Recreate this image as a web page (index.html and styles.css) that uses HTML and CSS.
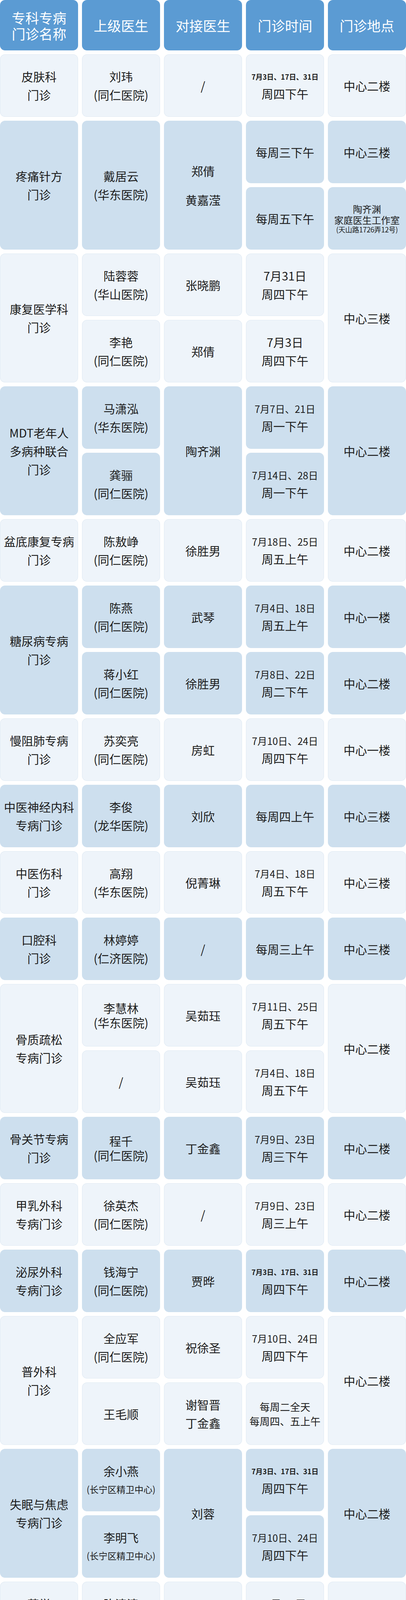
FILE: index.html
```html
<!DOCTYPE html>
<html lang="zh-CN">
<head>
<meta charset="utf-8">
<title>专科专病门诊</title>
<link rel="stylesheet" href="styles.css">
</head>
<body>
<div class="table">
  <div class="cell head"><div class="h">专科专病</div><div class="h">门诊名称</div></div>
  <div class="cell head"><div class="h">上级医生</div></div>
  <div class="cell head"><div class="h">对接医生</div></div>
  <div class="cell head"><div class="h">门诊时间</div></div>
  <div class="cell head"><div class="h">门诊地点</div></div>

  <!-- 1 皮肤科 -->
  <div class="cell lt"><div class="t">皮肤科</div><div class="t">门诊</div></div>
  <div class="cell lt"><div class="t">刘玮</div><div class="t">(同仁医院)</div></div>
  <div class="cell lt"><div class="t">/</div></div>
  <div class="cell lt"><div class="db">7月3日、17日、31日</div><div class="t">周四下午</div></div>
  <div class="cell lt"><div class="t">中心二楼</div></div>

  <!-- 2 疼痛针方 -->
  <div class="cell dk s2"><div class="t">疼痛针方</div><div class="t">门诊</div></div>
  <div class="cell dk s2"><div class="t">戴居云</div><div class="t">(华东医院)</div></div>
  <div class="cell dk s2"><div class="t wide">郑倩</div><div class="t wide">黄嘉滢</div></div>
  <div class="cell dk"><div class="t">每周三下午</div></div>
  <div class="cell dk"><div class="t">中心三楼</div></div>
  <div class="cell dk"><div class="t">每周五下午</div></div>
  <div class="cell dk"><div class="an">陶齐渊</div><div class="an">家庭医生工作室</div><div class="as">(天山路1726弄12号)</div></div>

  <!-- 3 康复医学科 -->
  <div class="cell lt s2"><div class="t">康复医学科</div><div class="t">门诊</div></div>
  <div class="cell lt"><div class="t">陆蓉蓉</div><div class="t">(华山医院)</div></div>
  <div class="cell lt"><div class="t">张晓鹏</div></div>
  <div class="cell lt"><div class="t">7月31日</div><div class="t">周四下午</div></div>
  <div class="cell lt s2"><div class="t">中心三楼</div></div>
  <div class="cell lt"><div class="t">李艳</div><div class="t">(同仁医院)</div></div>
  <div class="cell lt"><div class="t">郑倩</div></div>
  <div class="cell lt"><div class="t">7月3日</div><div class="t">周四下午</div></div>

  <!-- 4 MDT -->
  <div class="cell dk s2"><div class="t">MDT老年人</div><div class="t">多病种联合</div><div class="t">门诊</div></div>
  <div class="cell dk"><div class="t">马潇泓</div><div class="t">(华东医院)</div></div>
  <div class="cell dk s2"><div class="t">陶齐渊</div></div>
  <div class="cell dk"><div class="d">7月7日、21日</div><div class="t">周一下午</div></div>
  <div class="cell dk s2"><div class="t">中心二楼</div></div>
  <div class="cell dk"><div class="t">龚骊</div><div class="t">(同仁医院)</div></div>
  <div class="cell dk"><div class="d">7月14日、28日</div><div class="t">周一下午</div></div>

  <!-- 5 盆底 -->
  <div class="cell lt"><div class="t">盆底康复专病</div><div class="t">门诊</div></div>
  <div class="cell lt"><div class="t">陈敖峥</div><div class="t">(同仁医院)</div></div>
  <div class="cell lt"><div class="t">徐胜男</div></div>
  <div class="cell lt"><div class="d">7月18日、25日</div><div class="t">周五上午</div></div>
  <div class="cell lt"><div class="t">中心二楼</div></div>

  <!-- 6 糖尿病 -->
  <div class="cell dk s2"><div class="t">糖尿病专病</div><div class="t">门诊</div></div>
  <div class="cell dk"><div class="t">陈燕</div><div class="t">(同仁医院)</div></div>
  <div class="cell dk"><div class="t">武琴</div></div>
  <div class="cell dk"><div class="d">7月4日、18日</div><div class="t">周五上午</div></div>
  <div class="cell dk"><div class="t">中心一楼</div></div>
  <div class="cell dk"><div class="t">蒋小红</div><div class="t">(同仁医院)</div></div>
  <div class="cell dk"><div class="t">徐胜男</div></div>
  <div class="cell dk"><div class="d">7月8日、22日</div><div class="t">周二下午</div></div>
  <div class="cell dk"><div class="t">中心二楼</div></div>

  <!-- 7 慢阻肺 -->
  <div class="cell lt"><div class="t">慢阻肺专病</div><div class="t">门诊</div></div>
  <div class="cell lt"><div class="t">苏奕亮</div><div class="t">(同仁医院)</div></div>
  <div class="cell lt"><div class="t">房虹</div></div>
  <div class="cell lt"><div class="d">7月10日、24日</div><div class="t">周四下午</div></div>
  <div class="cell lt"><div class="t">中心一楼</div></div>

  <!-- 8 中医神经内科 -->
  <div class="cell dk"><div class="t">中医神经内科</div><div class="t">专病门诊</div></div>
  <div class="cell dk"><div class="t">李俊</div><div class="t">(龙华医院)</div></div>
  <div class="cell dk"><div class="t">刘欣</div></div>
  <div class="cell dk"><div class="t">每周四上午</div></div>
  <div class="cell dk"><div class="t">中心三楼</div></div>

  <!-- 9 中医伤科 -->
  <div class="cell lt"><div class="t">中医伤科</div><div class="t">门诊</div></div>
  <div class="cell lt"><div class="t">高翔</div><div class="t">(华东医院)</div></div>
  <div class="cell lt"><div class="t">倪菁琳</div></div>
  <div class="cell lt"><div class="d">7月4日、18日</div><div class="t">周五下午</div></div>
  <div class="cell lt"><div class="t">中心三楼</div></div>

  <!-- 10 口腔科 -->
  <div class="cell dk"><div class="t">口腔科</div><div class="t">门诊</div></div>
  <div class="cell dk"><div class="t">林婷婷</div><div class="t">(仁济医院)</div></div>
  <div class="cell dk"><div class="t">/</div></div>
  <div class="cell dk"><div class="t">每周三上午</div></div>
  <div class="cell dk"><div class="t">中心三楼</div></div>

  <!-- 11 骨质疏松 -->
  <div class="cell lt s2"><div class="t">骨质疏松</div><div class="t">专病门诊</div></div>
  <div class="cell lt"><div class="t tight">李慧林</div><div class="t tight">(华东医院)</div></div>
  <div class="cell lt"><div class="t">吴茹珏</div></div>
  <div class="cell lt"><div class="d">7月11日、25日</div><div class="t">周五下午</div></div>
  <div class="cell lt s2"><div class="t">中心二楼</div></div>
  <div class="cell lt"><div class="t">/</div></div>
  <div class="cell lt"><div class="t">吴茹珏</div></div>
  <div class="cell lt"><div class="d">7月4日、18日</div><div class="t">周五下午</div></div>

  <!-- 12 骨关节 -->
  <div class="cell dk"><div class="t">骨关节专病</div><div class="t">门诊</div></div>
  <div class="cell dk"><div class="t tight">程千</div><div class="t tight">(同仁医院)</div></div>
  <div class="cell dk"><div class="t">丁金鑫</div></div>
  <div class="cell dk"><div class="d">7月9日、23日</div><div class="t">周三下午</div></div>
  <div class="cell dk"><div class="t">中心二楼</div></div>

  <!-- 13 甲乳外科 -->
  <div class="cell lt"><div class="t">甲乳外科</div><div class="t">专病门诊</div></div>
  <div class="cell lt"><div class="t">徐英杰</div><div class="t">(同仁医院)</div></div>
  <div class="cell lt"><div class="t">/</div></div>
  <div class="cell lt"><div class="d">7月9日、23日</div><div class="t">周三上午</div></div>
  <div class="cell lt"><div class="t">中心二楼</div></div>

  <!-- 14 泌尿外科 -->
  <div class="cell dk"><div class="t">泌尿外科</div><div class="t">专病门诊</div></div>
  <div class="cell dk"><div class="t">钱海宁</div><div class="t">(同仁医院)</div></div>
  <div class="cell dk"><div class="t">贾晔</div></div>
  <div class="cell dk"><div class="db">7月3日、17日、31日</div><div class="t">周四下午</div></div>
  <div class="cell dk"><div class="t">中心二楼</div></div>

  <!-- 15 普外科 -->
  <div class="cell lt s2"><div class="t">普外科</div><div class="t">门诊</div></div>
  <div class="cell lt"><div class="t">全应军</div><div class="t">(同仁医院)</div></div>
  <div class="cell lt"><div class="t">祝徐圣</div></div>
  <div class="cell lt"><div class="d">7月10日、24日</div><div class="t">周四下午</div></div>
  <div class="cell lt s2"><div class="t">中心二楼</div></div>
  <div class="cell lt"><div class="t">王毛顺</div></div>
  <div class="cell lt"><div class="t">谢智晋</div><div class="t">丁金鑫</div></div>
  <div class="cell lt"><div class="m">每周二全天</div><div class="m">每周四、五上午</div></div>

  <!-- 16 失眠与焦虑 -->
  <div class="cell dk s2"><div class="t">失眠与焦虑</div><div class="t">专病门诊</div></div>
  <div class="cell dk"><div class="t">余小燕</div><div class="t sm">(长宁区精卫中心)</div></div>
  <div class="cell dk s2"><div class="t">刘蓉</div></div>
  <div class="cell dk"><div class="db">7月3日、17日、31日</div><div class="t">周四下午</div></div>
  <div class="cell dk s2"><div class="t">中心二楼</div></div>
  <div class="cell dk"><div class="t">李明飞</div><div class="t sm">(长宁区精卫中心)</div></div>
  <div class="cell dk"><div class="d">7月10日、24日</div><div class="t">周四下午</div></div>

  <!-- 17 药学 -->
  <div class="cell lt"><div class="t">药学</div><div class="t">门诊</div></div>
  <div class="cell lt"><div class="t">陈清清</div><div class="t">(同仁医院)</div></div>
  <div class="cell lt"><div class="t">孙涛</div></div>
  <div class="cell lt"><div class="t">7月17日</div><div class="t">周四上午</div></div>
  <div class="cell lt"><div class="t">中心二楼</div></div>

  <!-- 18 心脏康复 -->
  <div class="cell dk"><div class="t">心脏康复与</div><div class="t">体重管理门诊</div></div>
  <div class="cell dk"><div class="t">/</div></div>
  <div class="cell dk"><div class="t">赵云玲</div></div>
  <div class="cell dk"><div class="d">7月4日、18日</div><div class="t">周五下午</div></div>
  <div class="cell dk"><div class="t">中心三楼</div></div>

  <!-- 19 心脏起搏器 -->
  <div class="cell lt"><div class="t n26">心脏起搏器术后</div><div class="t">随访专病门诊</div></div>
  <div class="cell lt"><div class="t">吴献豪</div><div class="t">(同仁医院)</div></div>
  <div class="cell lt"><div class="t">赵云玲</div></div>
  <div class="cell lt"><div class="t">7月7日</div><div class="t">周一下午</div></div>
  <div class="cell lt"><div class="an">张晓鹏</div><div class="an">家庭医生工作室</div><div class="as">(天山二村60号甲)</div></div>

  <!-- 20 腰突症 -->
  <div class="cell dk"><div class="t">腰突症</div><div class="t">专病门诊</div></div>
  <div class="cell dk"><div class="t">崔晓</div><div class="t sm">(天山中医医院)</div></div>
  <div class="cell dk"><div class="t">谢智晋</div></div>
  <div class="cell dk"><div class="t">7月31日</div><div class="t">周四下午</div></div>
  <div class="cell dk"><div class="an">谢智晋</div><div class="an">家庭医生工作室</div><div class="as">(延安西路2029弄7号)</div></div>

  <!-- 21 中医肾脏 -->
  <div class="cell lt"><div class="t">中医肾脏</div><div class="t">专病门诊</div></div>
  <div class="cell lt"><div class="t">李交</div><div class="t">(龙华医院)</div></div>
  <div class="cell lt"><div class="t">谢智晋</div></div>
  <div class="cell lt"><div class="t">7月8日</div><div class="t">周二下午</div></div>
  <div class="cell lt"><div class="an">谢智晋</div><div class="an">家庭医生工作室</div><div class="as">(延安西路2029弄7号)</div></div>
</div>
</body>
</html>
```
FILE: styles.css
```css
html, body {
  margin: 0;
  padding: 0;
  background: #ffffff;
}
body {
  font-family: "Noto Sans CJK SC", "Noto Sans", sans-serif;
  color: #1c1c1c;
}
.table {
  display: grid;
  grid-template-columns: repeat(5, 200px);
  grid-template-rows: 129px repeat(28, 160px);
  gap: 10px;
  width: 1040px;
}
.cell {
  border-radius: 13px;
  display: flex;
  flex-direction: column;
  align-items: center;
  justify-content: center;
  text-align: center;
  white-space: nowrap;
  overflow: hidden;
}
.s2 { grid-row: span 2; }
.head {
  background: #5b9bd3;
  color: #ffffff;
}
.lt {
  background: #eef4fa;
  box-shadow: inset 0 0 0 1px rgba(214, 226, 238, 0.6);
}
.dk {
  background: #cddfee;
}
.h {
  font-size: 35px;
  line-height: 41px;
}
.t {
  font-size: 30px;
  line-height: 47px;
}
.t.wide { line-height: 74px; }
.t.tight { line-height: 37px; }
.t.sm { font-size: 23px; }
.t.n26 { font-size: 26px; line-height: 45px; }
.d {
  font-size: 25px;
  line-height: 42px;
}
.db {
  font-size: 18px;
  font-weight: 700;
  line-height: 40px;
}
.m {
  font-size: 26px;
  line-height: 37px;
}
.an {
  font-size: 24px;
  line-height: 28px;
}
.as {
  font-size: 18px;
  line-height: 20px;
  letter-spacing: -0.3px;
}
```
